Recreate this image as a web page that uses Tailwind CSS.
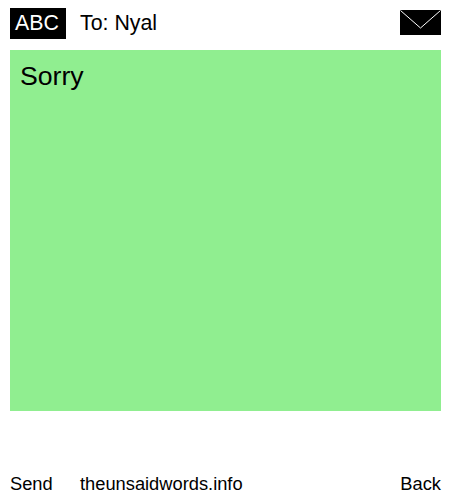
<!DOCTYPE html>
<html lang="en">
<head>
    <meta charset="UTF-8">
    <title>The Unsaid Words</title>
    <script src="https://cdn.jsdelivr.net/npm/@tailwindcss/browser@4"></script>
</head>
<body class="bg-white text-black font-['Liberation_Sans',sans-serif] overflow-hidden">
    <div class="w-[450px] h-[500px] pl-[10px] pr-[9px] pt-2 flex flex-col">
        <!-- Header -->
        <div class="h-[31px] flex items-start">
            <div class="w-14 h-[31px] pl-[5px] bg-black text-white text-[21.33px] leading-[31px]">ABC</div>
            <div class="ml-[14px] text-[21.33px] leading-[31px] flex-1">To: Nyal</div>
            <svg class="block mt-[2px]" width="41" height="25" viewBox="0 0 41 25">
                <rect width="41" height="25" fill="#000"/>
                <path d="M0.5 0.5 L20.5 18 L40.5 0.5" fill="none" stroke="#fff" stroke-width="1"/>
            </svg>
        </div>

        <!-- Message -->
        <div class="mt-[11px] h-[361px] bg-[#90ee90] px-[10px] py-[9px] text-[26.67px] leading-[34px]">Sorry</div>

        <!-- Footer -->
        <div class="mt-[61px] flex text-[18.3px] leading-6">
            <span class="w-[70px]">Send</span>
            <span class="flex-1">theunsaidwords.info</span>
            <span>Back</span>
        </div>
    </div>
</body>
</html>
